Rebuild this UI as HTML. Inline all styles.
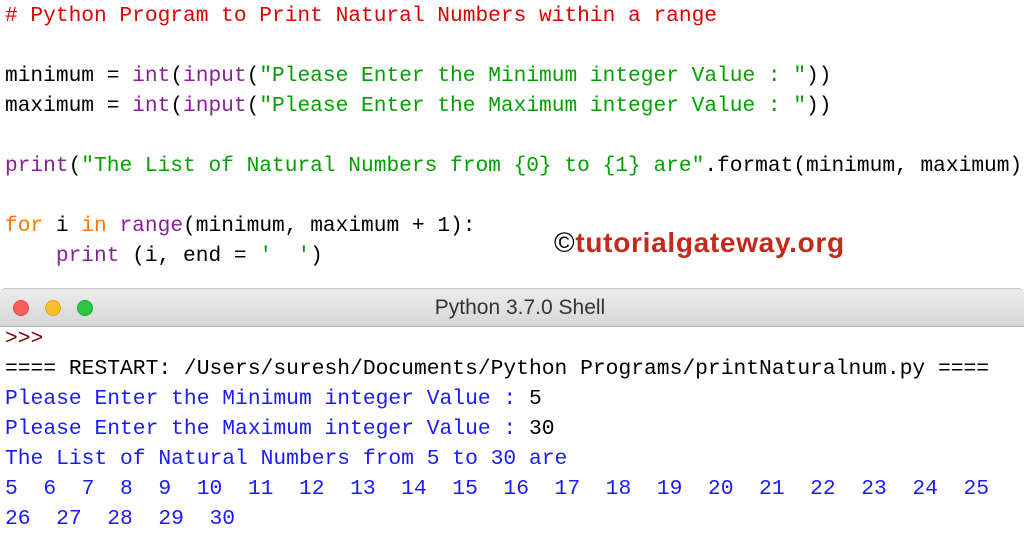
<!DOCTYPE html>
<html><head><meta charset="utf-8"><style>
body{margin:0;width:1024px;height:537px;background:#fff;overflow:hidden;position:relative;font-family:"Liberation Mono",monospace}
.code{position:absolute;left:5px;top:1px;font-size:21.2px;line-height:30px;white-space:pre;color:#000}
.r{color:#dd0000}.p{color:#8a1f9a}.g{color:#00a000}.o{color:#ff7700}
.wm{position:absolute;left:554px;top:227px;font-family:"Liberation Sans",sans-serif;font-weight:bold;font-size:28px;color:#c22a1a;letter-spacing:0.7px}
.wm span{color:#000;font-weight:normal}
.bar{position:absolute;left:0;top:288px;width:1024px;height:37px;background:linear-gradient(#ececec,#d6d6d6);border-top:1px solid #c8c8c8;border-bottom:1px solid #b0b0b0;border-radius:6px 6px 0 0}
.dot{position:absolute;top:11px;width:14px;height:14px;border-radius:50%}
.title{position:absolute;left:0;width:1040px;text-align:center;top:7px;font-family:"Liberation Sans",sans-serif;font-size:21px;color:#333}
.shell{position:absolute;left:5px;top:324px;font-size:21.3px;line-height:30px;white-space:pre;color:#000}
.b{color:#1a1aff}.dr{color:#800000}
</style></head><body>
<div class="code"><span class="r"># Python Program to Print Natural Numbers within a range</span>

minimum = <span class="p">int</span>(<span class="p">input</span>(<span class="g">"Please Enter the Minimum integer Value : "</span>))
maximum = <span class="p">int</span>(<span class="p">input</span>(<span class="g">"Please Enter the Maximum integer Value : "</span>))

<span class="p">print</span>(<span class="g">"The List of Natural Numbers from {0} to {1} are"</span>.format(minimum, maximum))

<span class="o">for</span> i <span class="o">in</span> <span class="p">range</span>(minimum, maximum + 1):
    <span class="p">print</span> (i, end = <span class="g">'  '</span>)</div>
<div class="wm"><span>©</span>tutorialgateway.org</div>
<div class="bar">
<div class="dot" style="left:13px;background:#fc5f57;border:0.5px solid #de4a42"></div>
<div class="dot" style="left:45px;background:#fdbc2e;border:0.5px solid #dea226"></div>
<div class="dot" style="left:77px;background:#28c840;border:0.5px solid #1fa831"></div>
<div class="title">Python 3.7.0 Shell</div>
</div>
<div class="shell"><span class="dr">&gt;&gt;&gt;</span>
==== RESTART: /Users/suresh/Documents/Python Programs/printNaturalnum.py ====
<span class="b">Please Enter the Minimum integer Value : </span>5
<span class="b">Please Enter the Maximum integer Value : </span>30
<span class="b">The List of Natural Numbers from 5 to 30 are
5  6  7  8  9  10  11  12  13  14  15  16  17  18  19  20  21  22  23  24  25
26  27  28  29  30</span></div>
</body></html>
